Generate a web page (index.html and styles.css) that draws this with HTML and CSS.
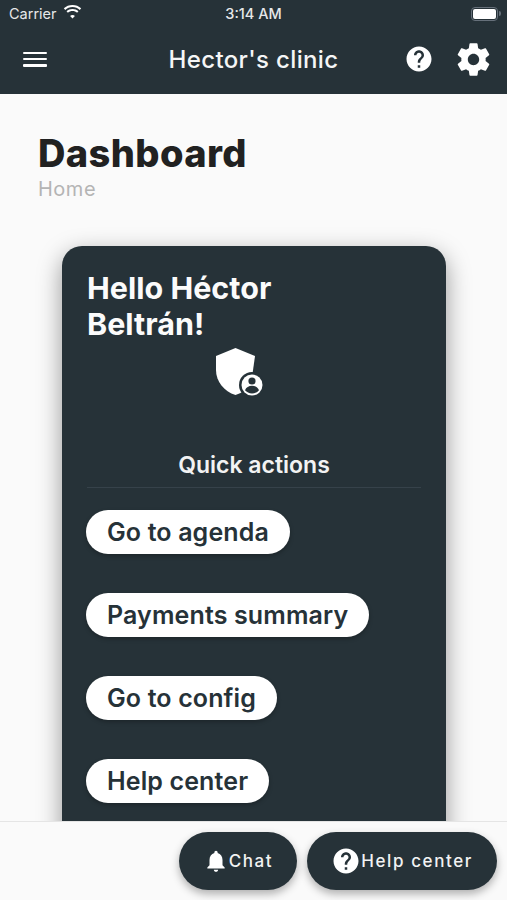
FILE: index.html
```html
<!DOCTYPE html>
<html lang="en">
<head>
<meta charset="utf-8">
<title>Dashboard</title>
<link rel="stylesheet" href="styles.css">
</head>
<body>
<div class="app">
  <header class="top">
    <div class="status">
      <div class="status-left">
        <span>Carrier</span>
        <svg class="wifi" viewBox="0 0 20 15" width="19" height="14"><path fill="#fff" d="M10 2.2c3 0 5.7 1.2 7.8 3.1l1.5-1.7C16.800 1.300 13.500 0 10 0S3.200 1.300.7 3.600l1.500 1.700C4.300 3.400 7 2.200 10 2.200zm0 4.300c1.900 0 3.600.7 4.900 1.900l1.500-1.700C14.700 5.200 12.500 4.300 10 4.300s-4.700.9-6.400 2.400l1.500 1.700c1.300-1.200 3-1.900 4.900-1.900zm0 4.200c-1 0-1.900.4-2.600 1L10 14.500l2.600-2.800c-.7-.6-1.600-1-2.600-1z"/></svg>
      </div>
      <span class="clock">3:14 AM</span>
      <div class="battery"><i></i></div>
    </div>
    <div class="bar">
      <button class="menu" aria-label="Menu"><i></i><i></i><i></i></button>
      <h1 class="title">Hector's clinic</h1>
      <div class="bar-actions">
        <svg class="help-icon" viewBox="0 0 24 24" width="30" height="30"><path fill="#fff" d="M12 2C6.480 2 2 6.480 2 12s4.480 10 10 10 10-4.480 10-10S17.520 2 12 2zm1 17h-2v-2h2v2zm2.070-7.750l-.9.920C13.450 12.900 13 13.500 13 15h-2v-.5c0-1.100.450-2.100 1.170-2.830l1.240-1.260c.370-.360.590-.860.590-1.410 0-1.100-.9-2-2-2s-2 .9-2 2H8c0-2.210 1.790-4 4-4s4 1.790 4 4c0 .880-.360 1.680-.930 2.250z"/></svg>
        <svg class="gear" viewBox="0 0 24 24" width="39" height="39"><path fill="#fff" d="M19.430 12.980c.040-.320.070-.640.070-.980s-.030-.660-.070-.980l2.110-1.650c.190-.150.240-.420.120-.640l-2-3.460c-.120-.220-.390-.300-.610-.220l-2.490 1c-.520-.400-1.080-.730-1.690-.980l-.380-2.650C14.460 2.180 14.250 2 14 2h-4c-.250 0-.460.180-.490.420l-.380 2.650c-.610.250-1.170.590-1.690.980l-2.490-1c-.230-.090-.490 0-.610.220l-2 3.460c-.130.220-.070.490.120.640l2.110 1.650c-.040.320-.070.650-.070.980s.030.660.070.980l-2.110 1.650c-.190.150-.240.420-.120.640l2 3.460c.120.220.390.300.610.220l2.490-1c.520.400 1.080.730 1.690.980l.380 2.650c.030.240.240.420.490.420h4c.250 0 .460-.180.490-.420l.380-2.650c.610-.250 1.170-.590 1.690-.980l2.490 1c.230.090.490 0 .610-.220l2-3.460c.120-.220.070-.490-.120-.640l-2.110-1.650zM12 15.500c-1.930 0-3.500-1.570-3.500-3.500s1.570-3.500 3.500-3.500 3.500 1.570 3.500 3.500-1.570 3.500-3.500 3.500z"/></svg>
      </div>
    </div>
  </header>

  <main class="content">
    <h2 class="page-title">Dashboard</h2>
    <p class="crumb">Home</p>
    <section class="card">
      <h3 class="hello">Hello Héctor<br>Beltrán!</h3>
      <div class="shield">
        <svg viewBox="0 0 50 50" width="50" height="50">
          <path fill="#fff" d="M20.500 0 1 8v14c0 11.500 8 21.500 19.500 25 7-2 13-7 16-14L40 8z"/>
          <circle cx="37" cy="37" r="13" fill="#263238"/>
          <circle cx="37" cy="37" r="10.500" fill="#fff"/>
          <circle cx="37" cy="33" r="3.600" fill="#263238"/>
          <path fill="#263238" d="M30 42.300c1-3 3.900-4.500 7-4.500s6 1.500 7 4.500c-1.700 2-4.200 3.200-7 3.200s-5.300-1.200-7-3.200z"/>
        </svg>
      </div>
      <h4 class="quick">Quick actions</h4>
      <div class="actions">
        <a class="pill">Go to agenda</a>
        <a class="pill">Payments summary</a>
        <a class="pill">Go to config</a>
        <a class="pill">Help center</a>
      </div>
    </section>
  </main>

  <footer class="foot">
    <button class="fab">
      <svg viewBox="0 0 24 24" width="26" height="26"><path fill="#fff" d="M12 22c1.100 0 2-.9 2-2h-4c0 1.100.9 2 2 2zm6-6v-5c0-3.070-1.630-5.640-4.500-6.320V4c0-.830-.670-1.500-1.500-1.500s-1.500.670-1.500 1.500v.680C7.640 5.360 6 7.920 6 11v5l-2 2v1h16v-1l-2-2z"/></svg>
      <span>Chat</span>
    </button>
    <button class="fab">
      <svg viewBox="0 0 24 24" width="30" height="30"><path fill="#fff" d="M12 2C6.480 2 2 6.480 2 12s4.480 10 10 10 10-4.480 10-10S17.520 2 12 2zm1 17h-2v-2h2v2zm2.070-7.750l-.9.920C13.450 12.900 13 13.500 13 15h-2v-.5c0-1.100.450-2.100 1.170-2.830l1.240-1.260c.370-.360.590-.860.590-1.410 0-1.100-.9-2-2-2s-2 .9-2 2H8c0-2.210 1.790-4 4-4s4 1.790 4 4c0 .880-.360 1.680-.930 2.250z"/></svg>
      <span>Help center</span>
    </button>
  </footer>
</div>
</body>
</html>
```
FILE: styles.css
```css
* { box-sizing: border-box; }
html, body { margin: 0; height: 100%; }
body { font-family: Inter, "Liberation Sans", sans-serif; background: #fafafa; color: #212121; overflow: hidden; }
.app { height: 900px; display: flex; flex-direction: column; }

.top { height: 94px; background: #263238; color: #fff; flex: none; }
.status { height: 27px; padding: 0 7px 0 9px; display: flex; align-items: center; justify-content: space-between; position: relative; font-size: 14.500px; color: #e6e8e9; }
.status-left { display: flex; align-items: center; gap: 6px; }
.wifi { margin-top: -3px; }
.clock { position: absolute; left: 0; right: 0; text-align: center; font-weight: 500; }
.battery { position: relative; width: 27px; height: 14px; border: 1.500px solid #66707a; border-radius: 4px; padding: 1px; margin-right: 2px; }
.battery i { display: block; height: 100%; background: #fff; border-radius: 2px; }
.battery::after { content: ""; position: absolute; right: -4px; top: 3px; width: 2px; height: 5px; background: #66707a; border-radius: 0 2px 2px 0; }

.bar { height: 67px; display: flex; align-items: center; position: relative; padding: 0 14px 3px 23px; }
.menu { width: 24px; height: 15px; padding: 0; background: none; border: 0; display: flex; flex-direction: column; justify-content: space-between; }
.menu i { display: block; height: 2.500px; width: 24px; background: #fff; border-radius: 1px; }
.title { position: absolute; left: 0; right: 0; margin: 0; text-align: center; font-size: 24px; font-weight: 500; letter-spacing: .36px; color: #f5f6f6; }
.bar-actions { margin-left: auto; display: flex; align-items: center; gap: 20px; }
.bar-actions svg { display: block; }

.content { flex: 1; min-height: 0; padding: 35px 61px 0 38px; overflow: hidden; }
.page-title { margin: 0; font-size: 38px; font-weight: 800; line-height: 48px; color: #212121; letter-spacing: .4px; }
.crumb { margin: 0; font-size: 20px; line-height: 25px; letter-spacing: .5px; color: #b4b4b4; }
.card { margin: 44px 0 0 24px; height: 620px; background: #263238; border-radius: 20px; padding: 24px 25px; color: #fff; box-shadow: 0 8px 24px rgba(0,0,0,.4); }
.hello { margin: 0; font-size: 30.500px; font-weight: 700; line-height: 36px; color: #fbfbfb; }
.shield { display: flex; justify-content: center; margin-top: 6px; height: 50px; padding-right: 28px; }
.quick { margin: 53px 0 0; padding-bottom: 8px; border-bottom: 1px solid #36424a; text-align: center; font-size: 23px; font-weight: 600; line-height: 28px; color: #f2f3f3; }
.actions { display: flex; flex-direction: column; align-items: flex-start; gap: 39px; margin: 22px 0 0 -1px; }
.pill { display: block; height: 44px; line-height: 44px; padding: 0 21px; background: #fff; border-radius: 22px; font-size: 25px; font-weight: 600; letter-spacing: .13px; color: #263238; box-shadow: 0 2px 4px rgba(0,0,0,.25); }

.foot { height: 79px; flex: none; background: #fafafa; border-top: 1px solid #e5e5e5; display: flex; justify-content: flex-end; align-items: flex-start; gap: 10px; padding: 10px 10px 0 0; position: relative; }
.fab { height: 58px; border: 0; border-radius: 29px; background: #263238; color: #f2f3f3; display: flex; align-items: center; justify-content: center; gap: 0; padding: 0 24px; font-family: inherit; font-size: 17px; font-weight: 500; letter-spacing: 1.600px; box-shadow: 0 4px 8px rgba(0,0,0,.3); }
```
